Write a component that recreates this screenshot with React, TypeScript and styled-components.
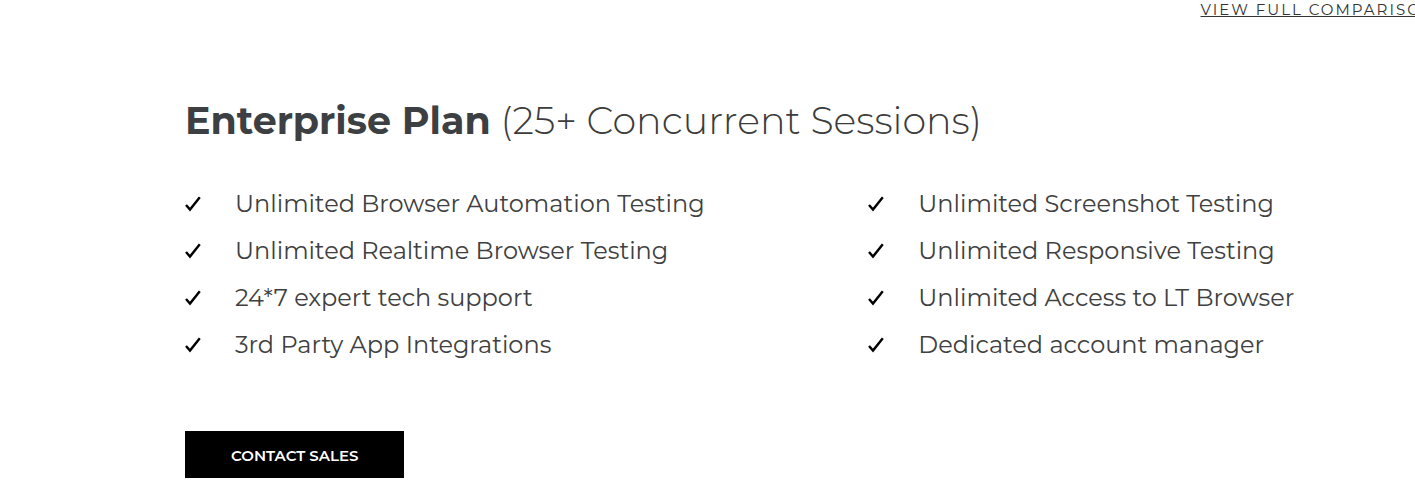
import React from "react";
import styled, { createGlobalStyle } from "styled-components";

const Global = createGlobalStyle`
  * { box-sizing: border-box; }
  body { margin: 0; background: #fff; color: #444; font-family: Montserrat, Inter, "Liberation Sans", sans-serif; }
`;
const Page = styled.main`
  padding: 0 0 19px 185px;
  overflow: hidden;
`;
const CompareRow = styled.div`
  display: flex;
  justify-content: flex-end;
  margin-right: -21px;
`;
const CompareLink = styled.a`
  color: #333;
  font-size: 15px;
  line-height: 20px;
  letter-spacing: 2px;
  white-space: nowrap;
  text-underline-offset: 1px;
`;
const Title = styled.h2`
  margin: 76px 0 0;
  font-size: 38px;
  line-height: 50px;
  font-weight: 300;
  color: #3c3c3c;
`;
const Strong = styled.strong`
  font-weight: 700;
  color: #3c4043;
`;
const Features = styled.ul`
  list-style: none;
  margin: 34px 0 0;
  padding: 0;
  display: grid;
  grid-template-columns: 5fr 4fr;
`;
const Feature = styled.li`
  display: flex;
  align-items: center;
  gap: 34px;
  color: #404040;
  font-size: 24px;
  line-height: 47px;
  white-space: nowrap;
`;
const Button = styled.button`
  margin-top: 63px;
  padding: 2px 46px 0;
  height: 47px;
  border: 0;
  background: #000;
  color: #fff;
  font: inherit;
  font-size: 15px;
  font-weight: 600;
`;
const Check = () => (
  <svg width="16" height="16" viewBox="0 0 16 16" fill="none" aria-hidden="true">
    <path d="M1 9 5 13.6 14.8 1.2" stroke="#000" strokeWidth="2.4" />
  </svg>
);
const features = [
  "Unlimited Browser Automation Testing", "Unlimited Screenshot Testing",
  "Unlimited Realtime Browser Testing", "Unlimited Responsive Testing",
  "24*7 expert tech support", "Unlimited Access to LT Browser",
  "3rd Party App Integrations", "Dedicated account manager",
];
export default function App() {
  return (
    <Page>
      <Global />
      <CompareRow><CompareLink href="#">VIEW FULL COMPARISON</CompareLink></CompareRow>
      <Title><Strong>Enterprise Plan</Strong> (25+ Concurrent Sessions)</Title>
      <Features>{features.map((f) => <Feature key={f}><Check />{f}</Feature>)}</Features>
      <Button type="button">CONTACT SALES</Button>
    </Page>
  );
}
